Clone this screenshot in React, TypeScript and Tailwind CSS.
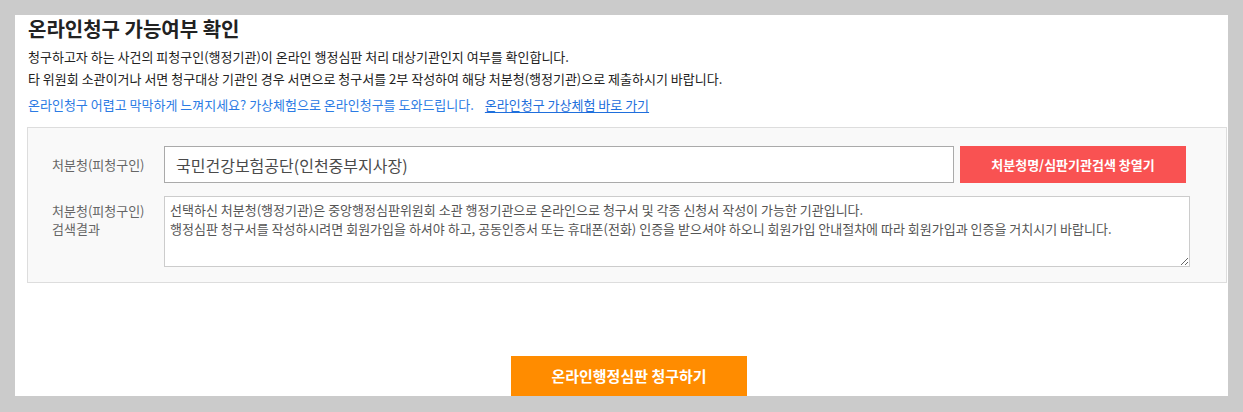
import React from "react";

const font = { fontFamily: '"Noto Sans CJK KR", "Noto Sans", sans-serif' };

const OnlineClaimCheck = () => {
  return (
    <div className="min-h-[412px] bg-[#cbcbcb] pt-[15px]" style={font}>
      <div className="mx-[15px] h-[381px] overflow-hidden bg-white">
        <div className="pl-[13px] pt-[2px]">
          <h2 className="text-[20px] font-bold leading-[24px] text-[#222]">
            온라인청구 가능여부 확인
          </h2>
          <div className="mt-[5px] text-[13px] leading-[22px] text-[#222]">
            <p>청구하고자 하는 사건의 피청구인(행정기관)이 온라인 행정심판 처리 대상기관인지 여부를 확인합니다.</p>
            <p>타 위원회 소관이거나 서면 청구대상 기관인 경우 서면으로 청구서를 2부 작성하여 해당 처분청(행정기관)으로 제출하시기 바랍니다.</p>
          </div>
          <p className="mt-[4px] text-[13px] leading-[22px] text-[#2b7be4]">
            온라인청구 어렵고 막막하게 느껴지세요? 가상체험으로 온라인청구를 도와드립니다.
            <a href="#" className="ml-[11px] text-[#1f6fdc] underline underline-offset-2">
              온라인청구 가상체험 바로 가기
            </a>
          </p>
        </div>

        <div className="ml-[12px] mr-[1px] mt-[11px] border border-[#dddddd] bg-[#f9f9f9] pt-[18px] pb-[15px]">
          <div className="flex items-center pl-[24px] pr-[40px]">
            <label className="w-[112px] shrink-0 text-[13px] text-[#666]">처분청(피청구인)</label>
            <input
              readOnly
              value="국민건강보험공단(인천중부지사장)"
              className="h-[37px] flex-1 border border-[#aaaaaa] bg-white pl-[11px] text-[16px] text-[#4a4a4a] outline-none"
              style={font}
            />
            <button className="ml-[6px] h-[37px] w-[226px] bg-[#f95252] text-[13px] font-bold text-white">
              처분청명/심판기관검색 창열기
            </button>
          </div>

          <div className="mt-[13px] flex items-start pl-[24px] pr-[36px]">
            <label className="mt-[6px] w-[112px] shrink-0 text-[13px] leading-[18px] text-[#666]">
              처분청(피청구인)
              <br />
              검색결과
            </label>
            <textarea
              readOnly
              value={
                "선택하신 처분청(행정기관)은 중앙행정심판위원회 소관 행정기관으로 온라인으로 청구서 및 각종 신청서 작성이 가능한 기관입니다.\n행정심판 청구서를 작성하시려면 회원가입을 하셔야 하고, 공동인증서 또는 휴대폰(전화) 인증을 받으셔야 하오니 회원가입 안내절차에 따라 회원가입과 인증을 거치시기 바랍니다."
              }
              className="h-[71px] flex-1 border border-[#cccccc] bg-white px-[5px] pt-[3px] text-[13px] leading-[19px] text-[#555] outline-none"
              style={font}
            />
          </div>
        </div>

        <div className="mt-[73px] flex justify-center pl-[15px]">
          <button className="h-[40px] w-[236px] bg-[#ff8c00] text-[15px] font-bold text-white">
            온라인행정심판 청구하기
          </button>
        </div>
      </div>
    </div>
  );
};

export default function App() {
  return <OnlineClaimCheck />;
}
